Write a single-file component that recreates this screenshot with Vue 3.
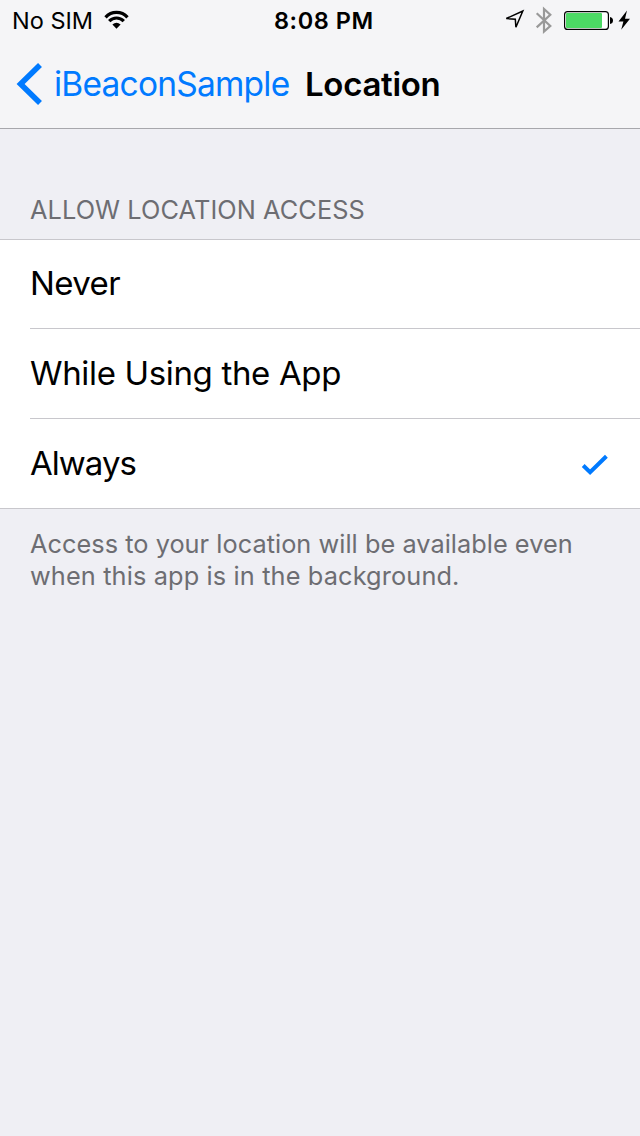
<script setup>
const options = [
  { label: 'Never', name: 'never' },
  { label: 'While Using the App', name: 'using' },
  { label: 'Always', name: 'always', selected: true },
]
</script>

<template>
  <div class="screen">
    <header>
      <div class="status">
        <div class="side">
          <span class="carrier">No SIM</span>
          <svg class="wifi" width="26" height="20" viewBox="104 10 26 20">
            <g fill="none" stroke="#000" stroke-width="3.2">
              <path d="M105.5 17.3C111.5 10.8 121.5 10.8 127.5 17.3" />
              <path d="M109.2 21.2C113.3 16.9 119.7 16.9 123.8 21.2" />
            </g>
            <path d="M112.4 24.5Q116.5 21.2 120.6 24.5L116.5 28.8Z" />
          </svg>
        </div>
        <span class="clock">8:08 PM</span>
        <div class="right">
          <svg width="136" height="40" viewBox="504 0 136 40">
            <path d="M506.3 18.5L522.8 11L515.9 27.2L515.3 19.2Z" fill="none" stroke="#000" stroke-width="1.5" />
            <path d="M536.7 13.2L550.3 26L544 31.6V9L550.3 14.7L536.7 27.4" fill="none" stroke="#999" stroke-width="2.2" />
            <rect x="564.6" y="11.6" width="43.8" height="17.8" rx="3" fill="#fff" stroke="#000" stroke-width="1.2" />
            <rect x="566" y="13" width="36" height="15" rx="1" fill="#4cd964" />
            <path d="M610 17Q613 17.5 613 20.5T610 24Z" />
            <path d="M627 10.5L618.5 21.5H623.4L621.2 29.8L630 18.8H625Z" />
          </svg>
        </div>
      </div>
      <nav>
        <svg class="back" width="28" height="44" viewBox="0 0 28 44"><path d="M24 3L4.6 22L24 41" fill="none" stroke="#007aff" stroke-width="5.6" /></svg>
        <span class="parent">iBeaconSample</span>
        <h1>Location</h1>
      </nav>
    </header>
    <h2>ALLOW LOCATION ACCESS</h2>
    <ul>
      <li v-for="option in options" :key="option.name">
        <span :class="option.name">{{ option.label }}</span>
        <svg v-if="option.selected" width="28" height="22" viewBox="0 0 28 22"><path d="M2.2 11.5L9.1 18.2L25.4 2.2" fill="none" stroke="#007aff" stroke-width="4" /></svg>
      </li>
    </ul>
    <p>Access to your location will be available even<br><span class="second">when this app is in the background.</span></p>
  </div>
</template>

<style>
body { margin: 0; background: #efeff4; }
</style>
<style scoped>
.screen { width: 640px; height: 1136px; background: #efeff4; font-family: Inter, sans-serif; color: #000; overflow: hidden; }
header { box-sizing: border-box; height: 129px; background: #f5f5f7; border-bottom: 1px solid #a7a7ac; }
.status { height: 40px; display: grid; grid-template-columns: 274px auto 1fr; font-size: 23.5px; }
.side { display: flex; padding-left: 12px; }
.carrier { width: 92px; line-height: 42px; letter-spacing: 0; white-space: nowrap; }
.wifi { margin-top: 10px; }
.clock { font-weight: 600; line-height: 42px; letter-spacing: 0.55px; }
.right { display: flex; justify-content: flex-end; }
nav { display: flex; height: 88px; align-items: center; font-size: 33.5px; padding-left: 16px; }
.parent { color: #007aff; margin-left: 10px; width: 251px; letter-spacing: -0.78px; }
h1 { font-size: 33px; font-weight: 600; margin: 0; letter-spacing: -0.3px; }
h2 { margin: 65px 0 0 30px; height: 45px; font-size: 25.3px; line-height: 32px; font-weight: 400; color: #6d6d72; letter-spacing: 0.1px; }
ul { list-style: none; margin: 0; padding: 0 0 0 30px; background: #fff; border-block: 1px solid #c8c7cc; }
li { box-sizing: border-box; height: 90px; display: flex; align-items: center; justify-content: space-between; font-size: 33px; padding: 0 31px 2px 0; border-bottom: 1px solid #c8c7cc; }
li:first-child { height: 89px; }
li:last-child { height: 89px; border: 0; }
.never { letter-spacing: -0.6px; }
.using { letter-spacing: -0.34px; }
.always { letter-spacing: -0.98px; }
li svg { margin-top: 4px; }
p { margin: 19px 30px; font-size: 25.3px; line-height: 32px; color: #6d6d72; letter-spacing: 0.04px; }
.second { letter-spacing: 0.14px; }
</style>
